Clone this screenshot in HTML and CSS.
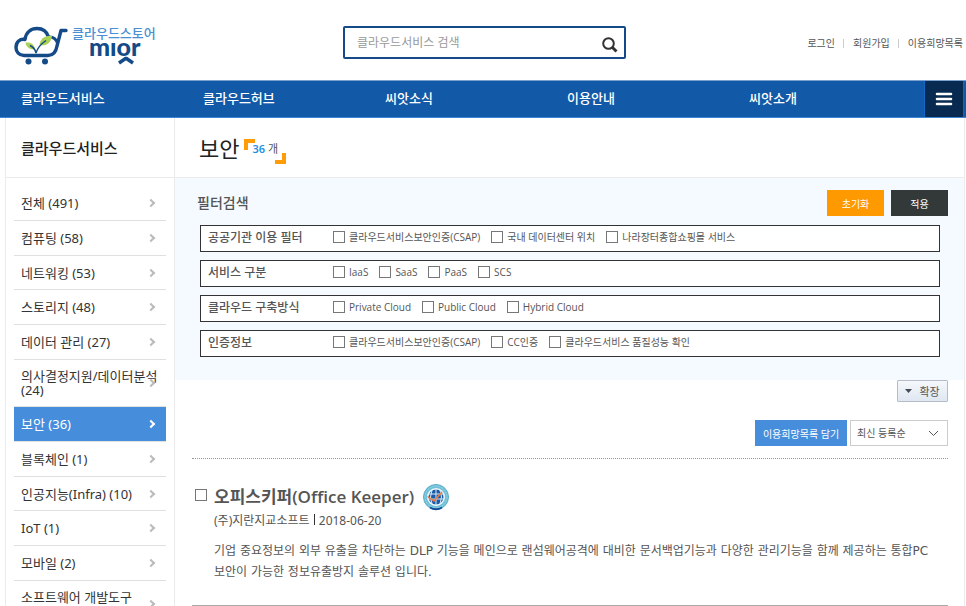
FILE: index.html
```html
<!DOCTYPE html>
<html lang="ko">
<head>
<meta charset="utf-8">
<title>클라우드스토어 씨앗</title>
<link rel="stylesheet" href="styles.css">
</head>
<body>
<header class="header">
  <a class="logo" href="#" aria-label="클라우드스토어 씨앗">
    <svg width="144" height="42" viewBox="0 0 144 42">
      <g fill="none" stroke="#134a87" stroke-width="3.400" stroke-linejoin="round" stroke-linecap="round">
        <path d="M52 4.500H47L43 20C42 26 39 29.500 34 29.500H10C5 29.500 2 26 2 21.500C2 16 6 12.500 11 13.500C12 6 17 2.500 23 2.500C29 2.500 33 6 34.500 11"/>
      </g>
      <path d="M34.500 11C39 10.500 42 13 43.500 17" fill="none" stroke="#134a87" stroke-width="3"/>
      <circle cx="14.500" cy="35.500" r="3" fill="#134a87"/>
      <circle cx="31" cy="35.500" r="3" fill="#134a87"/>
      <path d="M21 23.500C14 23.500 12 20 11.500 16.500C17 16 20.500 18 21 23.500Z" fill="#a9d155"/>
      <path d="M25.500 19C26 13 31 9 38 10C37 17 32 20.500 25.500 19Z" fill="#a9d155"/>
      <path d="M16 19.500Q21 22 22 27Q24 20 32 14.500" fill="none" stroke="#134a87" stroke-width="1.500"/>
      <text class="logo-name" x="58" y="12">클라우드스토어</text>
      <text class="logo-mark" x="75" y="30">mıor</text>
      <path d="M105 37L111.500 32.500H112.500L119 37" fill="none" stroke="#134a87" stroke-width="3.500"/>
    </svg>
  </a>
  <form class="search">
    <input type="search" placeholder="클라우드서비스 검색" aria-label="클라우드서비스 검색">
    <button type="button" aria-label="검색">
      <svg width="16" height="16" viewBox="0 0 16 16"><circle cx="6.500" cy="6.500" r="5.300" fill="none" stroke="#333" stroke-width="2"/><path d="M10.500 10.500L14.500 14.500" stroke="#333" stroke-width="3"/></svg>
    </button>
  </form>
  <div class="user-links">
    <a href="#">로그인</a><a href="#">회원가입</a><a href="#">이용희망목록</a>
  </div>
</header>
<nav class="nav">
  <a href="#">클라우드서비스</a>
  <a href="#">클라우드허브</a>
  <a href="#">씨앗소식</a>
  <a href="#">이용안내</a>
  <a href="#">씨앗소개</a>
  <button class="menu" type="button" aria-label="전체 메뉴">
    <svg width="18" height="14" viewBox="0 0 18 14"><path d="M2 2H16M2 7H16M2 12H16" stroke="#fff" stroke-width="2.600" stroke-linecap="round"/></svg>
  </button>
</nav>
<div class="page">
  <aside class="side">
    <h2 class="side-title">클라우드서비스</h2>
    <ul class="categories">
      <li><a href="#"><span>전체 (491)</span><i></i></a></li>
      <li><a href="#"><span>컴퓨팅 (58)</span><i></i></a></li>
      <li><a href="#"><span>네트워킹 (53)</span><i></i></a></li>
      <li><a href="#"><span>스토리지 (48)</span><i></i></a></li>
      <li><a href="#"><span>데이터 관리 (27)</span><i></i></a></li>
      <li><a href="#"><span>의사결정지원/데이터분석<br>(24)</span><i></i></a></li>
      <li class="current"><a href="#"><span>보안 (36)</span><i></i></a></li>
      <li><a href="#"><span>블록체인 (1)</span><i></i></a></li>
      <li><a href="#"><span>인공지능(Infra) (10)</span><i></i></a></li>
      <li><a href="#"><span>IoT (1)</span><i></i></a></li>
      <li><a href="#"><span>모바일 (2)</span><i></i></a></li>
      <li><a href="#"><span>소프트웨어 개발도구<br>(7)</span><i></i></a></li>
    </ul>
  </aside>
  <main class="content">
    <div class="title-row">
      <h1>보안</h1>
      <p class="count"><strong>36</strong> 개</p>
    </div>
    <form class="filter">
      <div class="filter-head">
        <h2>필터검색</h2>
        <button class="reset" type="reset">초기화</button>
        <button class="apply" type="button">적용</button>
      </div>
      <fieldset><legend>공공기관 이용 필터</legend>
        <label><input type="checkbox">클라우드서비스보안인증(CSAP)</label>
        <label><input type="checkbox">국내 데이터센터 위치</label>
        <label><input type="checkbox">나라장터종합쇼핑몰 서비스</label>
      </fieldset>
      <fieldset><legend>서비스 구분</legend>
        <label><input type="checkbox">IaaS</label>
        <label><input type="checkbox">SaaS</label>
        <label><input type="checkbox">PaaS</label>
        <label><input type="checkbox">SCS</label>
      </fieldset>
      <fieldset><legend>클라우드 구축방식</legend>
        <label><input type="checkbox">Private Cloud</label>
        <label><input type="checkbox">Public Cloud</label>
        <label><input type="checkbox">Hybrid Cloud</label>
      </fieldset>
      <fieldset><legend>인증정보</legend>
        <label><input type="checkbox">클라우드서비스보안인증(CSAP)</label>
        <label><input type="checkbox">CC인증</label>
        <label><input type="checkbox">클라우드서비스 품질성능 확인</label>
      </fieldset>
    </form>
    <div class="results">
      <button class="expand" type="button">
        <svg width="7" height="4" viewBox="0 0 7 4"><path d="M0 0H7L3.500 4Z" fill="#444b55"/></svg>확장
      </button>
      <div class="tools">
        <button class="wish" type="button">이용희망목록 담기</button>
        <div class="sort">
          <select aria-label="정렬"><option>최신 등록순</option></select>
          <svg width="11" height="7" viewBox="0 0 11 7"><path d="M1 1L5.500 5.500L10 1" fill="none" stroke="#555"/></svg>
        </div>
      </div>
      <article class="item">
        <input id="item1" type="checkbox">
        <div class="item-body">
          <h3><label for="item1">오피스키퍼(Office Keeper)</label>
            <svg width="28" height="28" viewBox="0 0 28 28" role="img" aria-label="인증">
              <circle cx="14" cy="14" r="12.500" fill="#6fc0d8" stroke="#5aaec8"/>
              <circle cx="14" cy="14" r="11" fill="none" stroke="#9ad8e6" stroke-dasharray="2 1"/>
              <path d="M8 24.500Q14 28 20 24.500" fill="none" stroke="#164c98" stroke-width="2"/>
              <circle cx="14" cy="14" r="9" fill="#f4f9fc"/>
              <circle cx="14" cy="14" r="7.500" fill="#1d5ba8"/>
              <path d="M6 11H22M6 16H22M14 6V22M10 7Q7 14 10 21M18 7Q21 14 18 21" fill="none" stroke="#d9ecf6"/>
              <path d="M5.500 13.500L12 18L20 9" fill="none" stroke="#f07a3c" stroke-width="1.500"/>
            </svg>
          </h3>
          <p class="meta">(주)지란지교소프트 <b></b> 2018-06-20</p>
          <p class="desc">기업 중요정보의 외부 유출을 차단하는 DLP 기능을 메인으로 랜섬웨어공격에 대비한 문서백업기능과 다양한 관리기능을 함께 제공하는 통합PC<wbr>보안이 가능한 정보유출방지 솔루션 입니다.</p>
        </div>
      </article>
    </div>
  </main>
</div>
</body>
</html>
```
FILE: styles.css
```css
* { box-sizing: border-box; }
html { overflow: hidden; }
body, h1, h2, h3, p, ul { margin: 0; padding: 0; }
body, input, button, select { font-family: "Noto Sans", "Noto Sans CJK KR", sans-serif; }
body { height: 100vh; overflow: hidden; background: #fff; color: #555; font-size: 12px; }
a { color: inherit; text-decoration: none; }
ul { list-style: none; }
button { padding: 0; border: 0; cursor: pointer; }
svg { display: block; }

.header {
  display: grid;
  grid-template-columns: 1fr 283px 1fr;
  height: 80px;
  padding: 26px 3px 0 6px;
}
.logo { margin-left: 8px; }
.logo svg { overflow: visible; }
.logo-name { fill: #4a90d2; font-size: 13px; font-weight: 500; }
.logo-mark { fill: #134a87; font-family: Lato, sans-serif; font-size: 25px; font-weight: 900; }
.search {
  display: flex;
  align-items: center;
  height: 33px;
  padding: 0 6px 0 12px;
  border: 2px solid #134a87;
  border-radius: 2px;
}
.search input { flex: 1; min-width: 0; padding: 0; border: 0; outline: 0; font-size: 12px; }
.search input::placeholder { color: #999; }
.search button { background: none; padding-top: 4px; }
.user-links {
  display: flex;
  justify-content: flex-end;
  align-items: center;
  height: 34px;
  font-size: 10px;
  line-height: 9px;
  white-space: nowrap;
}
.user-links a + a { margin-left: 8px; padding-left: 9px; border-left: 1px solid #ccc; }

.nav {
  display: flex;
  align-items: stretch;
  height: 38px;
  padding: 0 2px 0 21px;
  border-top: 1px solid #79a2d0;
  border-bottom: 1px solid #3c86d6;
  background: #1259a8;
  color: #fff;
  font-size: 13px;
  font-weight: 500;
  line-height: 35px;
}
.nav a { flex: 0 0 182px; }
.nav a:last-of-type { flex: 1; }
.menu {
  display: grid;
  place-items: center;
  width: 40px;
  border: solid #1266c8;
  border-width: 0 1px;
  background: #082a51;
}

.page { display: flex; }
.side { width: 170px; flex: none; margin-left: 5px; border: solid #ebebeb; border-width: 0 1px; }
.side-title, .title-row { height: 60px; border-bottom: 1px solid #ebebeb; }
.side-title { padding-left: 15px; color: #222; font-size: 15px; font-weight: 500; line-height: 60px; }
.categories { padding: 8px 8px 0; }
.categories a {
  display: flex;
  align-items: center;
  min-height: 35px;
  padding: 9px 12px 9px 7px;
  border-bottom: 1px solid #e0e0e0;
  color: #333;
  font-size: 13px;
  line-height: 14px;
}
.categories li:nth-child(3n) a { min-height: 34px; }
.categories span { flex: 1; min-width: 0; margin-right: -12px; white-space: nowrap; }
.categories i {
  width: 6px;
  height: 6px;
  margin-left: 4px;
  border: solid #bbb;
  border-width: 2px 2px 0 0;
  transform: rotate(45deg);
}
.categories .current a { background: #468edc; color: #fff; }
.categories .current i { border-color: #fff; }

.content { flex: 1; min-width: 0; margin-right: 1px; border-right: 1px solid #ebebeb; }
.title-row { display: flex; align-items: center; padding-left: 24px; }
.title-row h1 { margin-right: 5px; color: #222; font-size: 22px; font-weight: 400; line-height: 30px; }
.count {
  position: relative;
  padding: 0 8px;
  margin-top: 2px;
  font-size: 11px;
  line-height: 20px;
}
.count strong { color: #1f8fe0; font-weight: 600; }
.count::before, .count::after {
  content: "";
  position: absolute;
  width: 7px;
  height: 7px;
  border: solid #ff9c07;
}
.count::before { top: 0; left: 0; border-width: 4px 0 0 4px; }
.count::after { right: 0; bottom: -5px; border-width: 0 4px 4px 0; }

.filter { padding: 12px 16px 23px 22px; background: #f4faff; }
.filter-head { display: flex; gap: 7px; margin-bottom: 9px; }
.filter-head h2 { flex: 1; font-size: 14px; font-weight: 500; line-height: 25px; }
.filter-head button { width: 57px; height: 26px; color: #fff; font-size: 10px; }
.reset { background: #ff9900; }
.apply { background: #333839; }
fieldset {
  display: flex;
  align-items: flex-start;
  gap: 11px;
  height: 27px;
  margin: 0 8px 8px 3px;
  padding: 0 7px;
  border: 1px solid #333;
  background: #fff;
}
fieldset:last-child { margin-bottom: 0; }
legend { float: left; width: 114px; padding: 0; font-size: 12px; font-weight: 500; line-height: 24px; }
fieldset label {
  display: flex;
  align-items: center;
  gap: 4px;
  font-family: "Open Sans", "Noto Sans CJK KR", sans-serif;
  font-size: 10px;
  line-height: 22px;
  white-space: nowrap;
}
input[type="checkbox"] {
  appearance: none;
  flex: none;
  width: 12px;
  height: 12px;
  margin: 0;
  border: 1px solid #777;
  background: #fff;
}

.results { padding: 0 16px 0 17px; }
.expand {
  display: flex;
  align-items: center;
  justify-content: center;
  gap: 7px;
  width: 51px;
  height: 22px;
  margin-left: auto;
  border: 1px solid #b5bcc5;
  border-radius: 1px;
  background: linear-gradient(#f5f8fc, #dfe7f1);
  color: #555;
  font-size: 11px;
}
.tools {
  display: flex;
  justify-content: flex-end;
  gap: 3px;
  padding: 18px 0 12px;
  border-bottom: 1px dotted #999;
}
.wish { width: 92px; height: 26px; background: #468edc; color: #fff; font-size: 10px; }
.sort { display: grid; align-items: center; width: 98px; height: 26px; }
.sort select, .sort svg { grid-area: 1 / 1; }
.sort select {
  appearance: none;
  width: 100%;
  height: 26px;
  padding: 0 6px;
  border: 1px solid #ccc;
  border-radius: 0;
  background: #fff;
  color: #555;
  font-size: 10px;
}
.sort svg { justify-self: end; margin-right: 9px; pointer-events: none; }
.item { display: flex; gap: 7px; padding: 24px 0 22px 3px; border-bottom: 1px solid #aaa; }
.item > input { margin-top: 6px; }
.item-body { flex: 1; min-width: 0; }
.item h3 {
  display: flex;
  gap: 8px;
  align-items: center;
  font-family: "Open Sans", "Noto Sans CJK KR", sans-serif;
  font-size: 17px;
  font-weight: 600;
  line-height: 28px;
}
.meta { line-height: 20px; }
.meta b { display: inline-block; width: 1px; height: 11px; margin: 0 1px; background: #333; }
.desc { margin-top: 10px; font-family: "DejaVu Sans", "Noto Sans CJK KR", sans-serif; line-height: 21px; word-break: keep-all; }
```
